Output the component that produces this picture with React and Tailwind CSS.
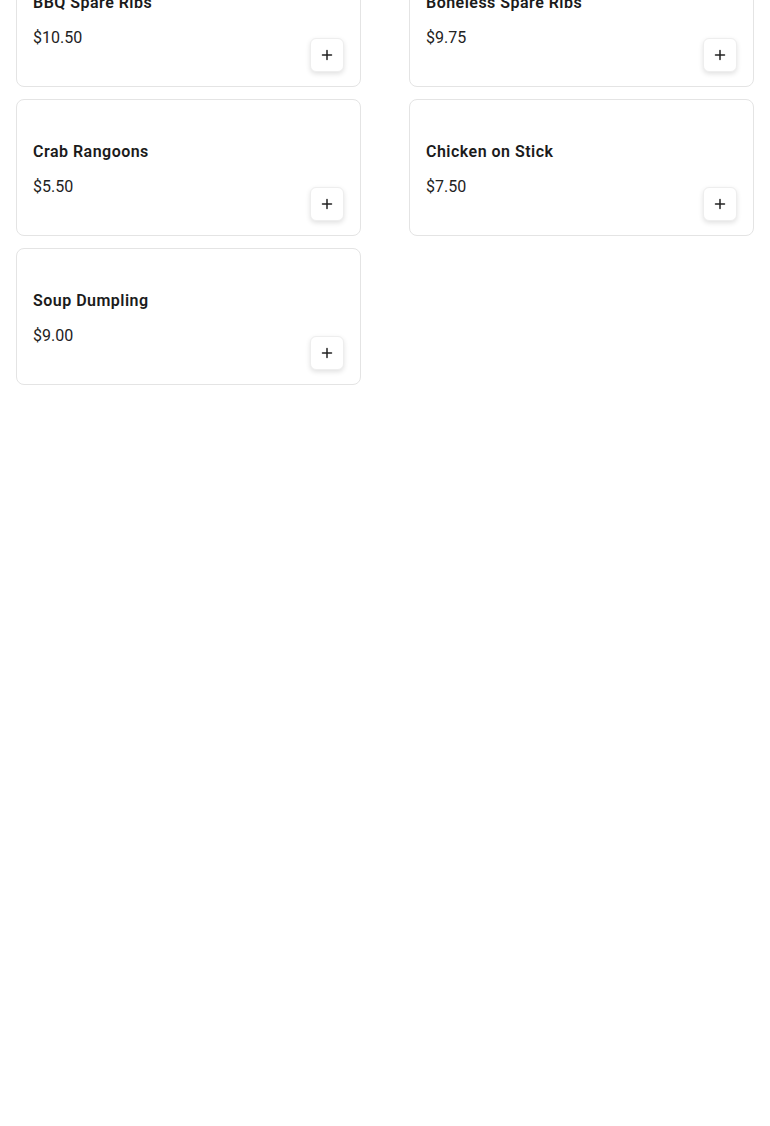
import React from 'react';

const items = [
  { id: 1, name: 'BBQ Spare Ribs', price: '$10.50' },
  { id: 2, name: 'Boneless Spare Ribs', price: '$9.75' },
  { id: 3, name: 'Crab Rangoons', price: '$5.50' },
  { id: 4, name: 'Chicken on Stick', price: '$7.50' },
  { id: 5, name: 'Soup Dumpling', price: '$9.00' },
];

const PlusIcon = () => (
  <svg width="12" height="12" viewBox="0 0 12 12" fill="none">
    <path d="M6 1.5v9M1.5 6h9" stroke="#222" strokeWidth="1.5" strokeLinecap="round" />
  </svg>
);

const MenuCard = ({ item }) => (
  <div className="flex flex-col rounded-lg border border-[#e4e4e4] bg-white px-4 pt-10 pb-[14px]">
    <h3 className="text-base font-semibold leading-6 tracking-[0.03em] text-[#1b1b1b]">{item.name}</h3>
    <div className="mt-[11px] flex justify-between">
      <span className="text-base leading-6 text-[#222]">{item.price}</span>
      <button className="mt-3 flex h-[34px] w-[34px] items-center justify-center rounded-md border border-[#eeeeee] bg-white shadow-[0_2px_5px_rgba(0,0,0,0.12)]">
        <PlusIcon />
      </button>
    </div>
  </div>
);

export default function App() {
  return (
    <div className="min-h-[1126px] bg-white font-['Roboto',sans-serif]">
      <div className="-mt-[50px] grid grid-cols-2 gap-x-12 gap-y-3 px-4">
        {items.map((item) => (
          <MenuCard key={item.id} item={item} />
        ))}
      </div>
    </div>
  );
}
